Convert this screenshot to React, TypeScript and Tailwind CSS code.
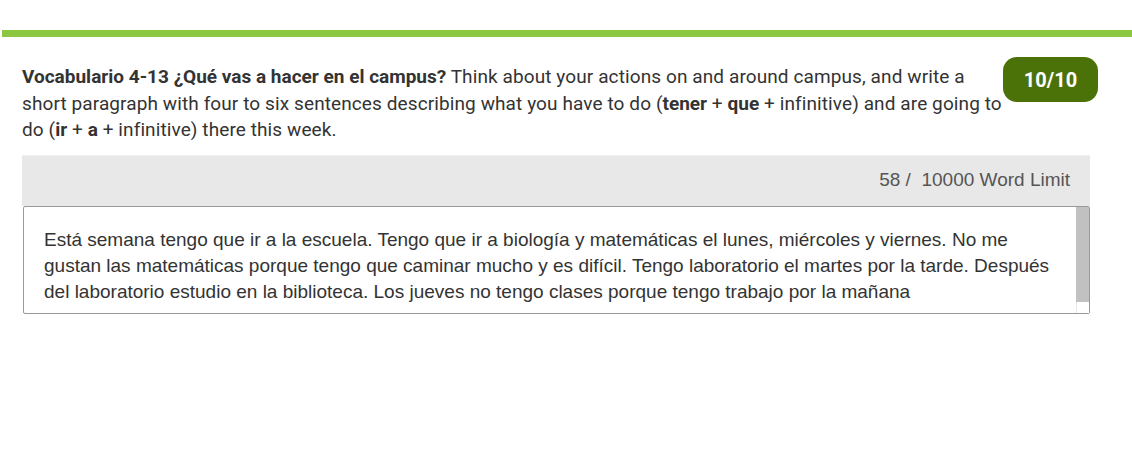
export default function App() {
  const answer =
    "Está semana tengo que ir a la escuela. Tengo que ir a biología y matemáticas el lunes, miércoles y viernes. No me gustan las matemáticas porque tengo que caminar mucho y es difícil. Tengo laboratorio el martes por la tarde. Después del laboratorio estudio en la biblioteca. Los jueves no tengo clases porque tengo trabajo por la mañana";

  return (
    <div className="h-[474px] w-[1132px] bg-white">
      <div className="pt-[30px] pl-[2px]">
        <div className="h-[7px] bg-[#8dc63f]" />
      </div>

      <div className="pl-[22px] pr-[34px] pt-[20px]">
        <div className="flex items-start">
          <p className="flex-1 pt-[7px] font-['Roboto',sans-serif] text-[19px] leading-[26.5px] tracking-[0.1px] text-[#333]">
            <b className="font-bold tracking-normal">Vocabulario 4-13 ¿Qué vas a hacer en el campus?</b>{" "}
            Think about your actions on and around campus, and write a short paragraph with four to
            six sentences describing what you have to do (<b className="tracking-normal">tener</b> +{" "}
            <b className="tracking-normal">que</b> + infinitive) and are going to do (
            <b className="tracking-normal">ir</b> + <b className="tracking-normal">a</b> + infinitive)
            there this week.
          </p>
          <div className="flex h-[45px] w-[95px] shrink-0 items-center justify-center rounded-[14px] bg-[#4b7208] font-['Roboto',sans-serif] text-[20px] font-bold text-white">
            10/10
          </div>
        </div>

        <div className="mt-[11px] w-[1068px]">
          <div className="flex h-[51px] items-center justify-end border-t border-[#f2f2f2] bg-[#e8e8e8] pr-[20px] font-['Liberation_Sans',Arial,sans-serif] text-[19px] text-[#555]">
            58 /&nbsp; 10000 Word Limit
          </div>
          <div className="ml-[1px] flex h-[108px] rounded-[2px] border border-[#999] bg-white">
            <div className="flex-1 pl-[20px] pr-[26px] pt-[20px] font-['Liberation_Sans',Arial,sans-serif] text-[19px] leading-[26px] text-[#333]">
              {answer}
            </div>
            <div className="flex w-[13px] flex-col">
              <div className="h-[95px] bg-[#c1c1c1]" />
              <div className="flex-1 border-l border-[#e6e6e6] bg-white" />
            </div>
          </div>
        </div>
      </div>
    </div>
  );
}
